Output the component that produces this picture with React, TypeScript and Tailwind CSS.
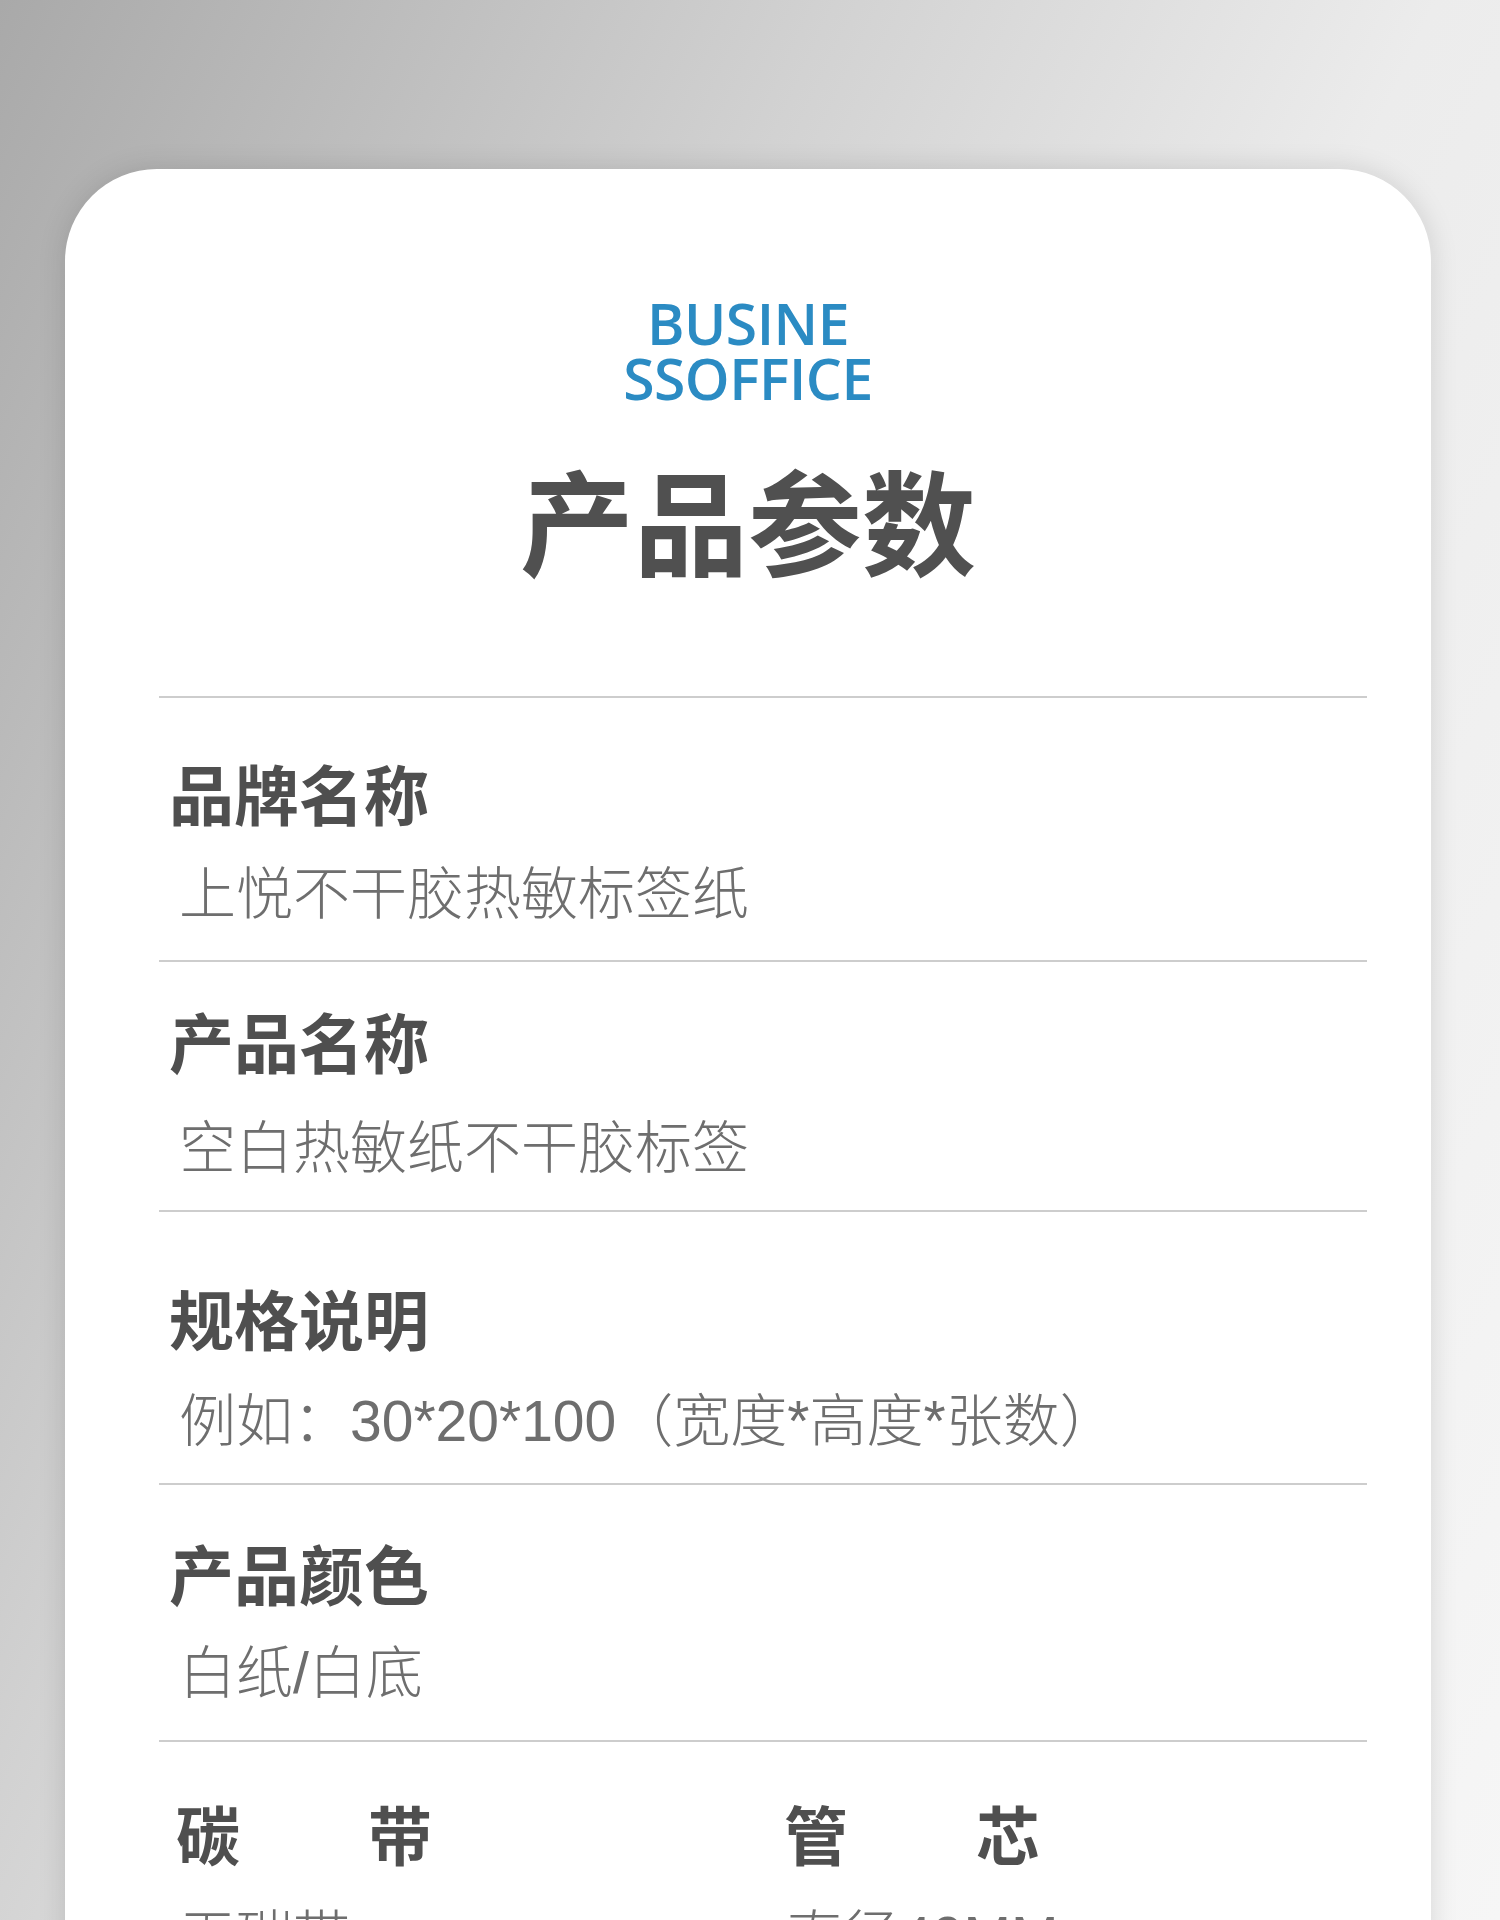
import React from "react";

type Row = {
    title: string;
    value: string;
    pad: string;
    gap: string;
};

const rows: Row[] = [
    { title: "品牌名称", value: "上悦不干胶热敏标签纸", pad: "pt-[62px] pb-[37px]", gap: "mt-[41px]" },
    { title: "产品名称", value: "空白热敏纸不干胶标签", pad: "pt-[46px] pb-[33px]", gap: "mt-[47px]" },
    { title: "规格说明", value: "例如：30*20*100（宽度*高度*张数）", pad: "pt-[73px] pb-[33px]", gap: "mt-[43px]" },
    { title: "产品颜色", value: "白纸/白底", pad: "pt-[55px] pb-[38px]", gap: "mt-[40px]" },
];

const cjk = "font-['Noto_Sans_CJK_SC','Noto_Sans',sans-serif]";
const valueFont = "font-['Liberation_Sans','Noto_Sans_CJK_SC',sans-serif]";

export default function App() {
    return (
        <div className="h-[1920px] w-[1500px] overflow-hidden bg-[linear-gradient(115deg,#a9a9a9_0%,#d2d2d2_35%,#ececec_60%,#f6f6f6_100%)] pl-[65px] pr-[69px] pt-[169px]">
            <div className="min-h-[1900px] rounded-t-[92px] bg-white shadow-[0_0_28px_rgba(0,0,0,0.13)]">
                {/* heading */}
                <div className="pt-[127px] text-center">
                    <p className="font-['Open_Sans',sans-serif] text-[57px] font-semibold leading-[55px] tracking-[-0.5px] text-[#2b8bc3]">
                        <span className="block">BUSINE</span>
                        <span className="block">SSOFFICE</span>
                    </p>
                    <h1 className={`${cjk} mt-[55px] text-[114px] font-bold leading-none text-[#505050]`}>产品参数</h1>
                </div>

                <div className="ml-[94px] mr-[64px] mt-[121px]">
                    {rows.map((row) => (
                        <div key={row.title} className={`border-t-2 border-[#cdcdcd] ${row.pad}`}>
                            <h3 className={`${cjk} pl-[10px] text-[65px] font-bold leading-none text-[#4f4f4f]`}>{row.title}</h3>
                            <p className={`${valueFont} ${row.gap} pl-[20px] text-[57px] font-light leading-none text-[#6e6e6e]`}>{row.value}</p>
                        </div>
                    ))}

                    <div className="flex border-t-2 border-[#cdcdcd] pt-[58px]">
                        <div className="w-[625px]">
                            <h3 className={`${cjk} whitespace-pre pl-[17px] text-[64px] font-bold leading-none text-[#4f4f4f]`}>碳　　带</h3>
                            <p className={`${valueFont} mt-[45px] pl-[20px] text-[57px] font-light leading-none text-[#6e6e6e]`}>无碳带</p>
                        </div>
                        <div>
                            <h3 className={`${cjk} whitespace-pre text-[64px] font-bold leading-none text-[#4f4f4f]`}>管　　芯</h3>
                            <p className={`${valueFont} mt-[45px] pl-[2px] text-[57px] font-light leading-none text-[#6e6e6e]`}>直径40MM</p>
                        </div>
                    </div>
                </div>
            </div>
        </div>
    );
}
